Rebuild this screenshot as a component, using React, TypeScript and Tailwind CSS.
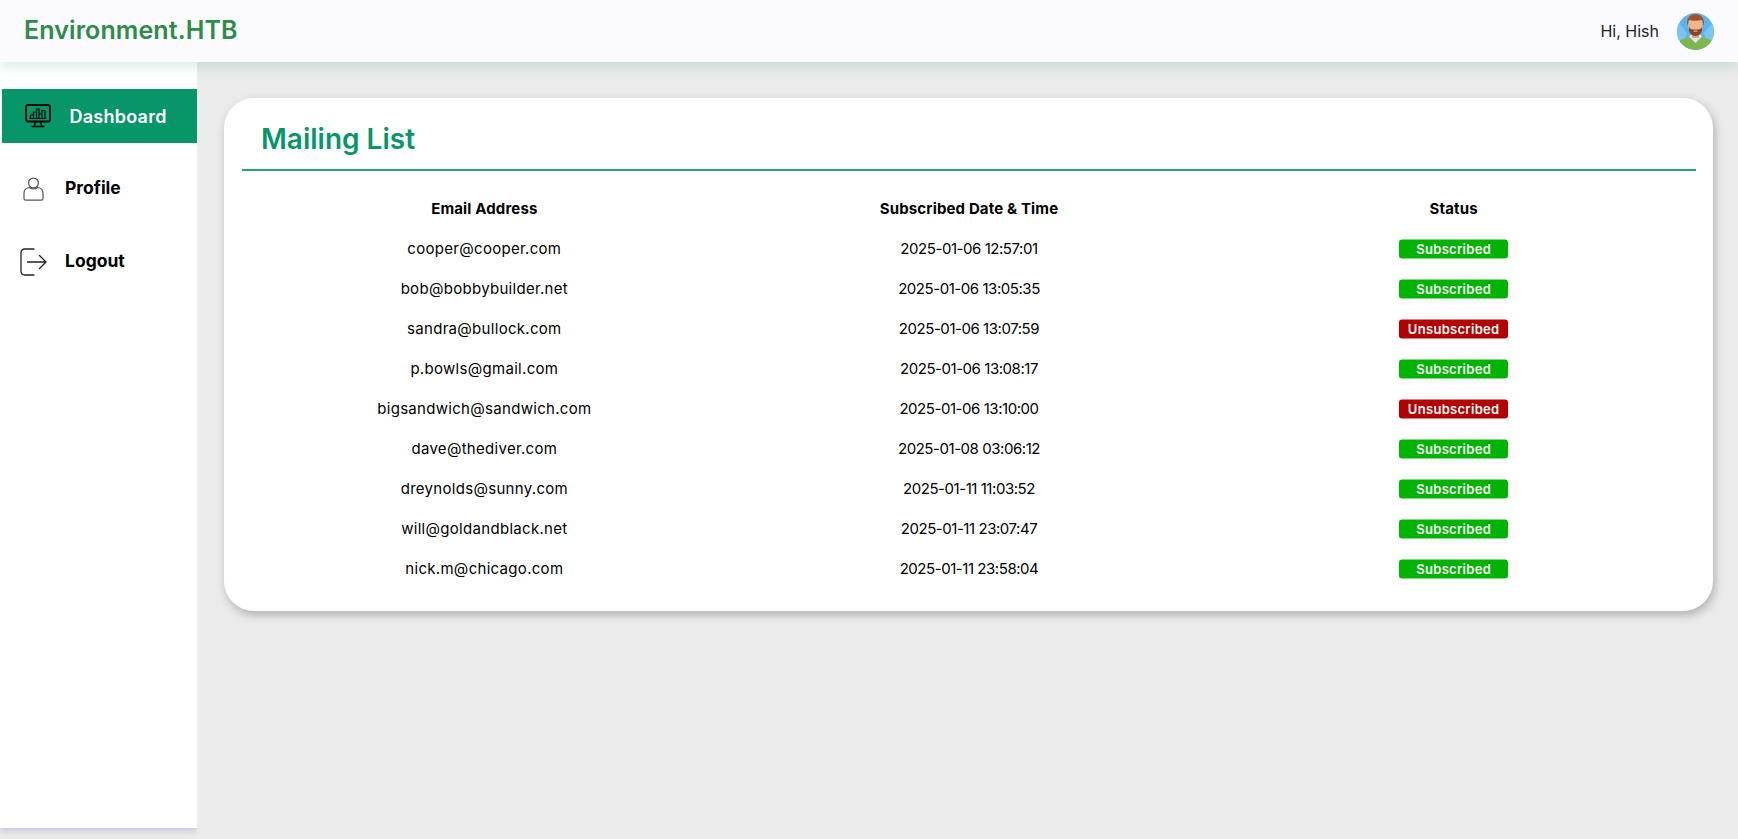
const rows: [string, string, boolean][] = [
  ["cooper@cooper.com", "2025-01-06 12:57:01", true],
  ["bob@bobbybuilder.net", "2025-01-06 13:05:35", true],
  ["sandra@bullock.com", "2025-01-06 13:07:59", false],
  ["p.bowls@gmail.com", "2025-01-06 13:08:17", true],
  ["bigsandwich@sandwich.com", "2025-01-06 13:10:00", false],
  ["dave@thediver.com", "2025-01-08 03:06:12", true],
  ["dreynolds@sunny.com", "2025-01-11 11:03:52", true],
  ["will@goldandblack.net", "2025-01-11 23:07:47", true],
  ["nick.m@chicago.com", "2025-01-11 23:58:04", true],
];

function DashIcon() {
  return (
    <svg width="26" height="24" viewBox="0 0 26 24" fill="none" stroke="#0a0a0a" strokeWidth="1.4">
      <rect x="1" y="1" width="24" height="16.5" rx="2" strokeWidth="1.8" />
      <path d="M10.5 17.5 9.5 21.5M15.5 17.5l1 4M7 22.5h12" strokeWidth="1.6" strokeLinecap="round" />
      <path d="M4.5 14.5h17M5.5 14.500v-3.500h3v3.500M8.500 14.500V8h3v6.500M11.500 14.500V5h2.500v9.500M14 14.500V10h3v4.500M17 14.500V6.500h3v8" strokeWidth="1.200" />
    </svg>
  );
}
function UserIcon() {
  return (
    <svg width="21" height="24" viewBox="0 0 21 24" fill="none" stroke="#555" strokeWidth="1.2">
      <circle cx="10.5" cy="6" r="4.9" />
      <path d="M6.5 10.5C3 11 1 13 1 16v5.5c0 1 .7 1.7 1.7 1.7h15.6c1 0 1.7-.7 1.7-1.7V16c0-3-2-5-5.5-5.5-1.2 1-2.6 1.5-4 1.5s-2.8-.5-4-1.5Z" />
    </svg>
  );
}
function LogoutIcon() {
  return (
    <svg width="27" height="28" viewBox="0 0 27 28" fill="none" stroke="#222" strokeWidth="1.3" strokeLinecap="round" strokeLinejoin="round">
      <path d="M14 1H5C2.5 1 1 2.5 1 5v18c0 2.5 1.500 4 4 4h9" />
      <path d="M7.500 14H26M19.500 7.500 26 14l-6.500 6.500" />
    </svg>
  );
}
function Avatar() {
  return (
    <svg width="37" height="37" viewBox="0 0 37 37">
      <defs>
        <clipPath id="av"><circle cx="18.500" cy="18.500" r="18.500" /></clipPath>
      </defs>
      <g clipPath="url(#av)">
        <rect width="37" height="37" fill="#5cb3ee" />
        <path d="M0 8 10 20 4 37H0ZM37 8 27 20l6 17h4Z" fill="#7cc4f5" />
        <path d="M1 37v-6c0-3 3-5 8-6l5-2h9l5 2c5 1 8 3 8 6v6Z" fill="#7cb84e" />
        <path d="M12 23.500 18.500 30 25 23.500 22 20h-7Z" fill="#dce8f2" />
        <rect x="15" y="17" width="7" height="8" fill="#e2a582" />
        <path d="M11.500 8c0-4 3-7 7-7s7 3 7 7v5c0 5-3 9.500-7 9.500s-7-4.500-7-9.500Z" fill="#f0b48f" />
        <path d="M11 13c0-3 0-5 1.500-6C15 8 21 8 24.500 7c1.500 1 1.500 3 1.500 6l1-3c0-5-3-9-8.500-9S10 5 10 10Z" fill="#a0522d" />
        <path d="M12 14c1 2 3 2.500 4.500 2.500h4c1.500 0 3.500-.5 4.500-2.500v3c0 3-3 6-6.500 6S12 20 12 17Z" fill="#8a4423" />
        <rect x="16.500" y="17.500" width="4" height="1.300" rx=".6" fill="#f0b48f" />
      </g>
    </svg>
  );
}

export default function App() {
  return (
    <div className="h-[839px] overflow-hidden bg-[#ebebeb] font-['Inter','Liberation_Sans',sans-serif] text-black">
      <header className="relative z-20 flex h-[62px] items-center justify-between bg-[#fafaff] px-6 shadow-[0_4px_12px_rgba(7,150,105,0.18)]">
        <div className="text-[25px] font-semibold tracking-[0.1px] text-[#2e8b4a]">Environment.HTB</div>
        <div className="flex items-center gap-[18px]">
          <span className="text-[16px] text-[#222]">Hi, Hish</span>
          <Avatar />
        </div>
      </header>
      <div className="flex items-start">
        <aside className="h-[766px] w-[197px] shrink-0 bg-white pt-[27px] shadow-[0_3px_6px_rgba(130,110,220,0.3)]">
          <a className="ml-[1.5px] flex h-[54px] items-center bg-[#079669] pl-[23px]">
            <DashIcon />
            <span className="ml-[19px] text-[18px] font-semibold tracking-[0.25px] text-white">Dashboard</span>
          </a>
          <a className="mt-[19px] flex h-[54px] items-center pl-[23px]">
            <UserIcon />
            <span className="ml-[21px] -translate-y-px text-[17.500px] font-bold">Profile</span>
          </a>
          <a className="mt-[19px] flex h-[54px] items-center pl-[20px]">
            <LogoutIcon />
            <span className="ml-[18px] -translate-y-px text-[17.500px] font-bold">Logout</span>
          </a>
        </aside>
        <main className="relative z-10 h-[777px] flex-1 bg-[#ebebeb] pl-[27px] pr-[25px] pt-9">
          <section className="h-[513px] rounded-[30px] bg-white pl-[18px] pr-[17px] shadow-[2px_4px_10px_rgba(0,0,0,0.25)]">
            <h1 className="flex h-[73px] items-center border-b-2 border-[#22a57c] pl-[19px] pt-[10px] text-[28px] font-semibold text-[#079669]">Mailing List</h1>
            <table className="mt-[18px] w-full table-fixed border-collapse text-center text-[15px] tracking-[0.3px]">
              <thead>
                <tr className="h-[40px] text-[15px] tracking-[0.15px]">
                  <th className="font-bold">Email Address</th>
                  <th className="font-bold">Subscribed Date &amp; Time</th>
                  <th className="font-bold">Status</th>
                </tr>
              </thead>
              <tbody>
                {rows.map(([email, date, sub]) => (
                  <tr key={email} className="h-[40px]">
                    <td>{email}</td>
                    <td className="tracking-[-0.45px]">{date}</td>
                    <td>
                      <span className={`mx-auto block h-[19px] w-[109px] -translate-y-[0.5px] rounded-[3px] text-center text-[13px] font-semibold leading-[19px] text-white ${sub ? "bg-[#00b300]" : "bg-[#b30000]"}`}>
                        {sub ? "Subscribed" : "Unsubscribed"}
                      </span>
                    </td>
                  </tr>
                ))}
              </tbody>
            </table>
          </section>
        </main>
      </div>
    </div>
  );
}
